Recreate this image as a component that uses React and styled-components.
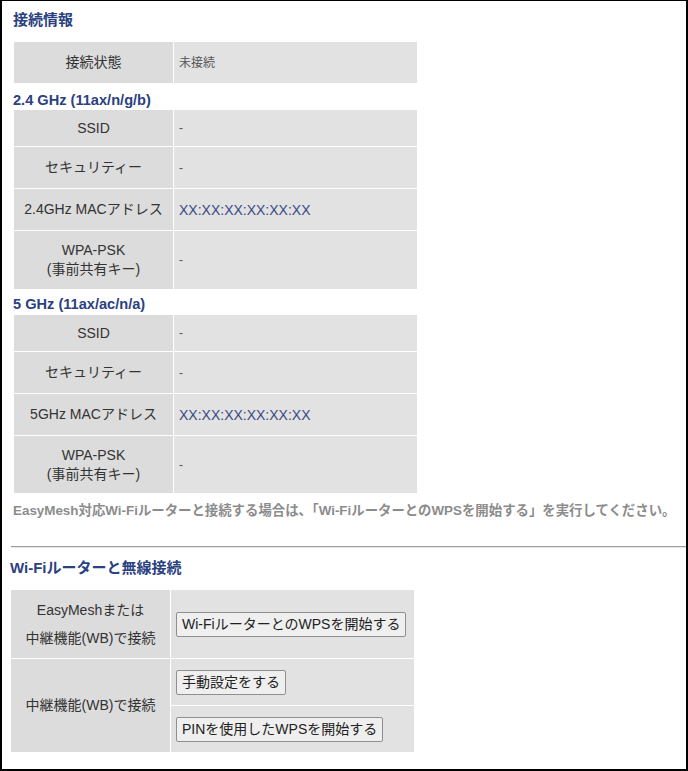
import styled, { createGlobalStyle } from "styled-components";

const GlobalStyle = createGlobalStyle`
  html, body {
    margin: 0;
    padding: 0;
    background: #ffffff;
  }
  body {
    font-family: "Liberation Sans", "Noto Sans CJK JP", sans-serif;
    color: #333333;
  }
`;

const band24 = [
  { label: "SSID", value: "-", h: 36 },
  { label: "セキュリティー", value: "-", h: 41 },
  { label: "2.4GHz MACアドレス", value: "XX:XX:XX:XX:XX:XX", mac: true, h: 41 },
  { label: ["WPA-PSK", "(事前共有キー)"], value: "-", h: 58 },
];

const band5 = [
  { label: "SSID", value: "-", h: 36 },
  { label: "セキュリティー", value: "-", h: 41 },
  { label: "5GHz MACアドレス", value: "XX:XX:XX:XX:XX:XX", mac: true, h: 41 },
  { label: ["WPA-PSK", "(事前共有キー)"], value: "-", h: 57 },
];

export default function App() {
  return (
    <>
      <GlobalStyle />
      <Frame>
        <Section $inset={3}>
          <Title $top={10}>接続情報</Title>
          <InfoTable $top={12}>
            <tbody>
              <tr style={{ height: 41 }}>
                <Th>接続状態</Th>
                <Td>未接続</Td>
              </tr>
            </tbody>
          </InfoTable>

          <BandTitle $top={8}>2.4 GHz (11ax/n/g/b)</BandTitle>
          <BandTable rows={band24} top={1} />

          <BandTitle $top={6}>5 GHz (11ax/ac/n/a)</BandTitle>
          <BandTable rows={band5} top={2} />

          <Note>
            EasyMesh対応Wi-Fiルーターと接続する場合は、「Wi-FiルーターとのWPSを開始する」を実行してください。
          </Note>
        </Section>

        <Rule />

        <Section $inset={0}>
          <Title $top={11}>Wi-Fiルーターと無線接続</Title>
          <InfoTable $top={12} $left={1}>
            <tbody>
              <tr style={{ height: 68 }}>
                <Th $lh={28}>
                  EasyMeshまたは
                  <br />
                  中継機能(WB)で接続
                </Th>
                <Td>
                  <Button>Wi-FiルーターとのWPSを開始する</Button>
                </Td>
              </tr>
              <tr style={{ height: 46 }}>
                <Th rowSpan={2}>中継機能(WB)で接続</Th>
                <Td>
                  <Button>手動設定をする</Button>
                </Td>
              </tr>
              <tr style={{ height: 46 }}>
                <Td>
                  <Button>PINを使用したWPSを開始する</Button>
                </Td>
              </tr>
            </tbody>
          </InfoTable>
        </Section>
      </Frame>
    </>
  );
}

function BandTable({ rows, top }) {
  return (
    <InfoTable $top={top}>
      <tbody>
        {rows.map((r, i) => (
          <tr key={i} style={{ height: r.h }}>
            <Th $lh={19}>
              {Array.isArray(r.label)
                ? r.label.map((l, j) => (
                    <span key={j}>
                      {j > 0 && <br />}
                      {l}
                    </span>
                  ))
                : r.label}
            </Th>
            <Td $mac={r.mac}>{r.value}</Td>
          </tr>
        ))}
      </tbody>
    </InfoTable>
  );
}

const Frame = styled.div`
  box-sizing: border-box;
  width: 688px;
  height: 771px;
  border: 2px solid #000000;
  border-top-width: 1px;
  padding: 0 0 0 8px;
  overflow: hidden;
`;

const Section = styled.section`
  padding-left: ${(p) => p.$inset}px;
  padding-right: 10px;
`;

const Title = styled.h2`
  margin: ${(p) => p.$top}px 0 0;
  font-size: 15px;
  line-height: 18px;
  font-weight: bold;
  color: #2b4180;
`;

const BandTitle = styled.h3`
  margin: ${(p) => p.$top}px 0 0;
  font-size: 14.6px;
  line-height: 16px;
  font-weight: bold;
  color: #2b4180;
`;

const InfoTable = styled.table`
  margin: ${(p) => p.$top}px 0 0 ${(p) => (p.$left ?? 1) - 1}px;
  border-collapse: separate;
  border-spacing: 1px;
  width: 405px;
  table-layout: fixed;
`;

const Th = styled.th`
  width: 159px;
  padding: 0 4px;
  background: #dcdcdc;
  color: #333333;
  font-size: 14px;
  font-weight: normal;
  line-height: ${(p) => p.$lh ?? 19}px;
  text-align: center;
  vertical-align: middle;
  box-sizing: border-box;
`;

const Td = styled.td`
  padding: 0 4px 0 5px;
  background: #e2e2e2;
  color: ${(p) => (p.$mac ? "#3a4a82" : "#555555")};
  font-size: ${(p) => (p.$mac ? 14 : 12)}px;
  line-height: 18px;
  text-align: left;
  vertical-align: middle;
`;

const Note = styled.p`
  margin: 9px 0 0;
  font-size: 13.4px;
  line-height: 16px;
  font-weight: bold;
  color: #8c8c8c;
  white-space: nowrap;
`;

const Rule = styled.hr`
  margin: 27px 0 0 1px;
  border: 0;
  border-top: 1px solid #9e9e9e;
  border-bottom: 1px solid #e6e6e6;
  height: 0;
`;

const Button = styled.button`
  font-family: "Liberation Sans", "Noto Sans CJK JP", sans-serif;
  font-size: 14px;
  line-height: 17px;
  height: 25px;
  padding: 0 5px;
  color: #222222;
  background: #efefef;
  border: 1px solid #8f8f8f;
  border-radius: 2px;
`;
